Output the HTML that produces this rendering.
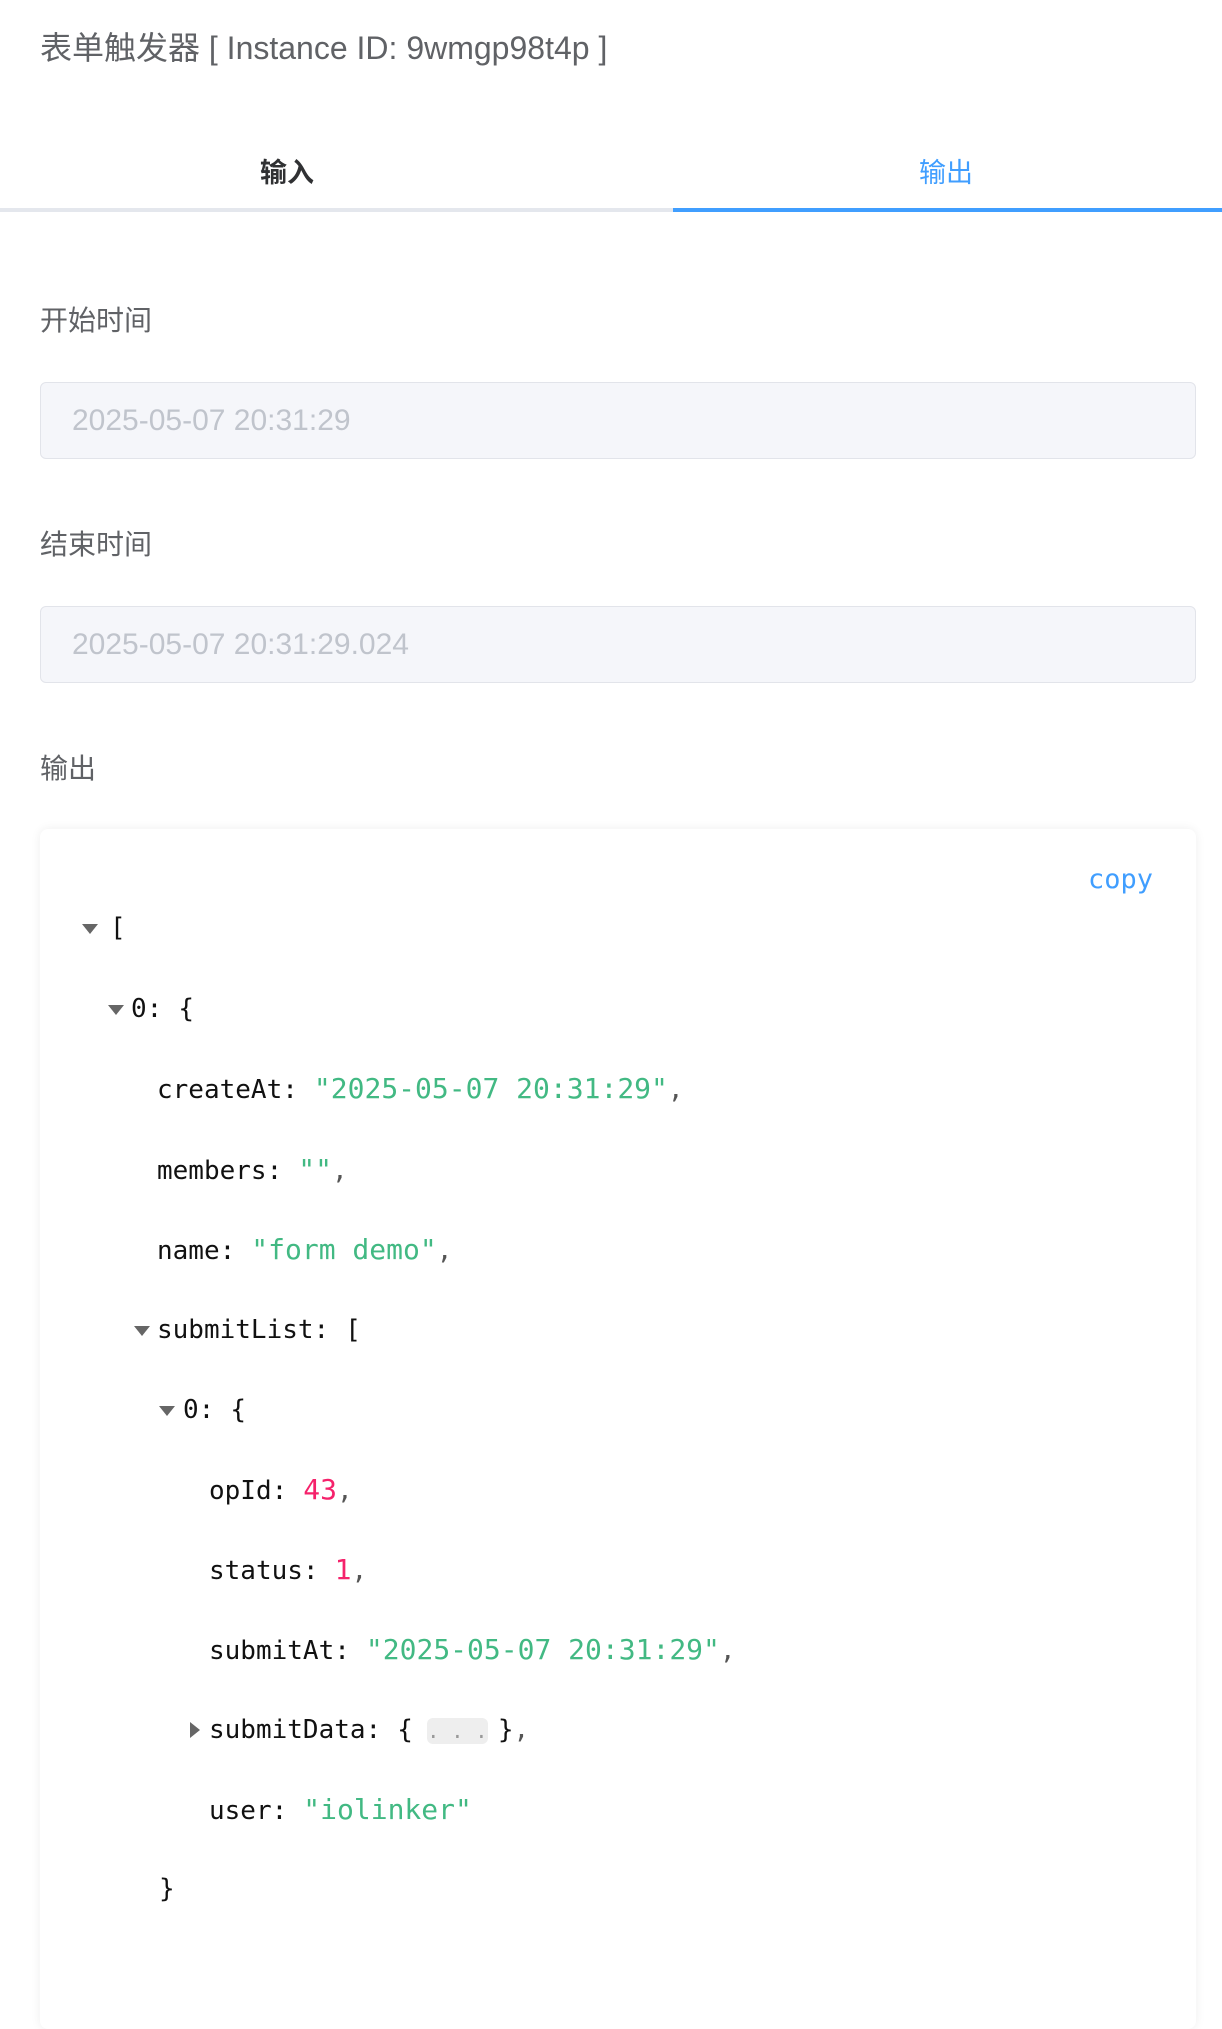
<!DOCTYPE html>
<html><head><meta charset="utf-8"><style>
body{margin:0;width:1222px;height:1952px;background:#fff;overflow:hidden;position:relative;font-family:"Liberation Sans","Noto Sans CJK SC",sans-serif}
.a{position:absolute;white-space:nowrap}
.title{left:40px;top:27px;font-size:32px;color:#606266;line-height:42px}
.tab{top:153px;font-size:27px;line-height:40px;width:200px;text-align:center}
.lbl{left:40px;font-size:28px;color:#606266;line-height:40px}
.inp{left:40px;width:1156px;height:77px;background:#f5f6fa;border:1px solid #e2e4ea;border-radius:6px;box-sizing:border-box;color:#c0c4cc;font-size:30px;line-height:75px;padding-left:31px}
.card{left:40px;top:829px;width:1156px;height:1200px;background:#fff;border-radius:8px;box-shadow:0 0 10px rgba(0,0,0,0.07)}
.ln{position:absolute;height:80px;line-height:80px;font-family:"DejaVu Sans Mono","Liberation Mono",monospace;font-size:26px;color:#111;white-space:nowrap}
.s{color:#42b983;font-size:28px}.n{color:#f5226b;font-size:28px}.c{color:#555}
.k{margin-right:16px}
.td{position:absolute;width:0;height:0;border-left:8px solid transparent;border-right:8px solid transparent;border-top:10px solid #666}
.tr{position:absolute;width:0;height:0;border-top:8px solid transparent;border-bottom:8px solid transparent;border-left:10px solid #666}
.ell{display:inline-block;background:#eeeeee;border-radius:6px;color:#999;font-size:20px;line-height:26px;height:26px;width:61px;text-align:center;vertical-align:middle;margin:0 10px 0 2px}
</style></head><body>
<div class="a title">表单触发器 [ Instance ID: 9wmgp98t4p ]</div>
<div class="a tab" style="left:187px;color:#303133;font-weight:bold">输入</div>
<div class="a tab" style="left:846px;color:#409eff">输出</div>
<div class="a" style="left:0;top:208px;width:673px;height:4px;background:#e4e7ed"></div>
<div class="a" style="left:673px;top:208px;width:549px;height:4px;background:#409eff"></div>
<div class="a lbl" style="top:301px">开始时间</div>
<div class="a inp" style="top:382px">2025-05-07 20:31:29</div>
<div class="a lbl" style="top:525px">结束时间</div>
<div class="a inp" style="top:606px">2025-05-07 20:31:29.024</div>
<div class="a lbl" style="top:749px">输出</div>
<div class="a card"></div>
<div class="ln" style="left:1088px;top:840px;color:#409eff;font-size:27px">copy</div>

<div class="td" style="left:82px;top:924px"></div>
<div class="ln" style="left:110px;top:888px">[</div>
<div class="td" style="left:108px;top:1005px"></div>
<div class="ln" style="left:131px;top:969px"><span class="k">0:</span>{</div>
<div class="ln" style="left:157px;top:1049px"><span class="k">createAt:</span><span class="s">"2025-05-07 20:31:29"</span><span class="c">,</span></div>
<div class="ln" style="left:157px;top:1130px"><span class="k">members:</span><span class="s">""</span><span class="c">,</span></div>
<div class="ln" style="left:157px;top:1210px"><span class="k">name:</span><span class="s">"form demo"</span><span class="c">,</span></div>
<div class="td" style="left:134px;top:1326px"></div>
<div class="ln" style="left:157px;top:1290px"><span class="k">submitList:</span>[</div>
<div class="td" style="left:159px;top:1406px"></div>
<div class="ln" style="left:183px;top:1370px"><span class="k">0:</span>{</div>
<div class="ln" style="left:209px;top:1450px"><span class="k">opId:</span><span class="n">43</span><span class="c">,</span></div>
<div class="ln" style="left:209px;top:1530px"><span class="k">status:</span><span class="n">1</span><span class="c">,</span></div>
<div class="ln" style="left:209px;top:1610px"><span class="k">submitAt:</span><span class="s">"2025-05-07 20:31:29"</span><span class="c">,</span></div>
<div class="tr" style="left:190px;top:1722px"></div>
<div class="ln" style="left:209px;top:1690px"><span class="k">submitData:</span>{<span style="margin-left:12px"></span><span class="ell">. . .</span>}<span class="c">,</span></div>
<div class="ln" style="left:209px;top:1770px"><span class="k">user:</span><span class="s">"iolinker"</span></div>
<div class="ln" style="left:159px;top:1849px">}</div>
</body></html>
